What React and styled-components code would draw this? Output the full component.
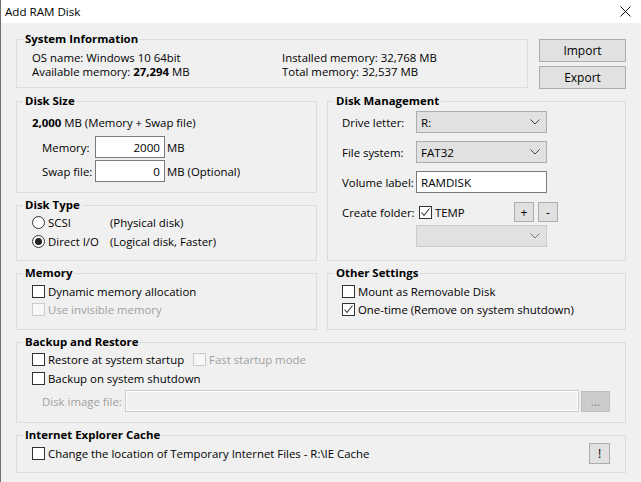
import React from 'react';
import styled, { createGlobalStyle } from 'styled-components';

//Global
const GlobalStyle = createGlobalStyle`
	html, body {
		margin: 0;
		padding: 0;
		background: #f0f0f0;
	}
	body {
		font-family: "Open Sans", "Liberation Sans", sans-serif;
		font-size: 11.4px;
		color: #000;
	}
`;

//Window frame
const Window = styled.div`
	width: 641px;
	height: 482px;
	box-sizing: border-box;
	border-left: 1px solid #6f6f6f;
	background: #f0f0f0;
	overflow: hidden;
	display: flex;
	flex-direction: column;
`;

const TitleBar = styled.div`
	height: 23px;
	flex: none;
	background: #fff;
	display: flex;
	align-items: center;
	justify-content: space-between;
	padding: 0 10px 0 4px;
	font-size: 11.6px;
`;

const Body = styled.div`
	display: flex;
	flex-direction: column;
	gap: 5px;
	padding: 9px 15px 0 15px;
`;

const TopRow = styled.div`
	display: flex;
	gap: 11px;
	align-items: flex-start;
`;

const Columns = styled.div`
	display: grid;
	grid-template-columns: 301px 299px;
	column-gap: 10px;
	align-items: stretch;
`;

const Column = styled.div`
	display: flex;
	flex-direction: column;
	gap: 5px;
`;

const ButtonColumn = styled.div`
	display: flex;
	flex-direction: column;
	gap: 4px;
	padding-top: 7px;
	width: 87px;
`;

//Group boxes
const Group = styled.fieldset`
	margin: 0;
	min-width: 0;
	box-sizing: border-box;
	border: 1px solid #dcdcdc;
	padding: ${props => props.$pad || '4px 15px 8px'};
	flex: ${props => props.$grow ? 1 : 'none'};
`;

const Legend = styled.legend`
	font-weight: 700;
	line-height: 14px;
	height: 14px;
	padding: 0 2px;
	margin-left: ${props => 6 - (props.$inset ?? 15)}px;
`;

const InfoGrid = styled.div`
	display: grid;
	grid-template-columns: 250px 1fr;
	line-height: 14px;
	white-space: nowrap;
`;

const Line = styled.div`
	line-height: 14px;
	white-space: nowrap;
`;

const FieldGrid = styled.div`
	display: grid;
	grid-template-columns: ${props => props.$label}px ${props => props.$field}px auto;
	row-gap: ${props => props.$gap}px;
	align-items: center;
	margin: ${props => props.$margin || '0'};
`;

const Text = styled.span`
	color: ${props => props.$disabled ? '#a0a0a0' : '#000'};
	white-space: nowrap;
	margin-left: ${props => props.$ml || 0}px;
	width: ${props => props.$w ? `${props.$w}px` : 'auto'};
	flex: none;
`;

//Controls
const Button = styled.button`
	box-sizing: border-box;
	width: ${props => props.$w}px;
	height: ${props => props.$h}px;
	padding: 0;
	margin: 0;
	font-family: inherit;
	font-size: 12px;
	color: ${props => props.$disabled ? '#8a8a8a' : '#000'};
	background: ${props => props.$disabled ? '#cccccc' : '#e1e1e1'};
	border: 1px solid ${props => props.$disabled ? '#bfbfbf' : '#adadad'};
	display: inline-flex;
	align-items: center;
	justify-content: center;
	flex: none;
`;

const TextInput = styled.input`
	box-sizing: border-box;
	width: ${props => props.$w}px;
	height: 22px;
	margin: 0;
	padding: 0 4px;
	font-family: inherit;
	font-size: 11.6px;
	color: #000;
	text-align: ${props => props.$align || 'left'};
	background: ${props => props.$disabled ? '#f0f0f0' : '#fff'};
	border: 1px solid ${props => props.$disabled ? '#cccccc' : '#7a7a7a'};
	box-shadow: ${props => props.$disabled ? 'inset 0 0 0 1px #fff' : 'none'};
	outline: none;
	flex: none;
`;

const Combo = styled.div`
	box-sizing: border-box;
	width: 131px;
	height: 22px;
	display: flex;
	align-items: center;
	justify-content: space-between;
	padding: 0 6px 0 4px;
	font-size: 11.6px;
	background: #e1e1e1;
	border: 1px solid ${props => props.$disabled ? '#cccccc' : '#adadad'};
`;

const Chevron = ({ color }) => (
	<svg width="10" height="6" viewBox="0 0 10 6">
		<polyline points="0.5,0.5 5,5 9.5,0.5" fill="none" stroke={color} strokeWidth="1" />
	</svg>
);

const CheckBox = styled.span`
	box-sizing: border-box;
	width: 13px;
	height: 13px;
	flex: none;
	display: inline-flex;
	align-items: center;
	justify-content: center;
	background: ${props => props.$disabled ? '#f7f7f7' : '#fff'};
	border: 1px solid ${props => props.$disabled ? '#cccccc' : '#333'};
`;

const Check = ({ checked, disabled }) => (
	<CheckBox $disabled={disabled}>
		{checked && (
			<svg width="11" height="11" viewBox="0 0 11 11">
				<polyline points="1.5,5.5 4,8.5 9.5,1.5" fill="none" stroke="#333" strokeWidth="1.1" />
			</svg>
		)}
	</CheckBox>
);

const RadioCircle = styled.span`
	box-sizing: border-box;
	width: 13px;
	height: 13px;
	flex: none;
	border-radius: 50%;
	border: 1px solid #333;
	background: #fff;
	display: inline-flex;
	align-items: center;
	justify-content: center;
	&::after {
		content: '';
		width: 7px;
		height: 7px;
		border-radius: 50%;
		background: ${props => props.$on ? '#222' : 'transparent'};
	}
`;

const OptionRow = styled.div`
	display: flex;
	align-items: center;
	gap: 3px;
	height: ${props => props.$h || 18}px;
	white-space: nowrap;
`;

const RadioGrid = styled.div`
	display: grid;
	grid-template-columns: 13px 59px auto;
	column-gap: 3px;
	grid-auto-rows: 19px;
	align-items: center;
`;

const BackupGrid = styled.div`
	display: grid;
	grid-template-columns: 161px auto;
	grid-auto-rows: 19px;
	align-items: center;
`;

const ImageRow = styled.div`
	display: flex;
	align-items: center;
	margin-top: 2px;
	padding-left: 10px;
	height: 22px;
`;

const FolderRow = styled.div`
	display: flex;
	align-items: center;
	height: 20px;
	gap: 3px;
	margin-top: 9px;
`;

const FolderControls = styled.div`
	display: flex;
	align-items: center;
	gap: 4px;
	margin: 0 53px 0 auto;
`;

const MgmtGrid = styled.div`
	display: grid;
	grid-template-columns: 74px 131px;
	row-gap: 8px;
	align-items: center;
	margin-top: ${props => props.$mt || 0}px;
`;

const CacheRow = styled.div`
	display: flex;
	align-items: center;
	height: 20px;
	gap: 3px;
`;

const Spacer = styled.div`
	flex: 1;
`;

const CloseIcon = () => (
	<svg width="11" height="11" viewBox="0 0 11 11">
		<path d="M0.5 0.5 L10.5 10.5 M10.5 0.5 L0.5 10.5" stroke="#111" strokeWidth="1" fill="none" />
	</svg>
);

const App = () => {
	return (
		<Window>
			<GlobalStyle />
			<TitleBar>
				<span>Add RAM Disk</span>
				<CloseIcon />
			</TitleBar>
			<Body>
				<TopRow>
					<Group $grow $pad="5px 15px 8px">
						<Legend>System Information</Legend>
						<InfoGrid>
							<span>OS name: Windows 10 64bit</span>
							<span>Installed memory: 32,768 MB</span>
							<span>Available memory: <b>27,294</b> MB</span>
							<span>Total memory: 32,537 MB</span>
						</InfoGrid>
					</Group>
					<ButtonColumn>
						<Button $w={87} $h={23}>Import</Button>
						<Button $w={87} $h={23}>Export</Button>
					</ButtonColumn>
				</TopRow>

				<Columns>
					<Column>
						<Group $pad="8px 15px 10px">
							<Legend>Disk Size</Legend>
							<Line><b>2,000</b> MB (Memory + Swap file)</Line>
							<FieldGrid $label={53} $field={70} $gap={2} $margin="6px 0 0 10px">
								<Text>Memory:</Text>
								<TextInput $w={70} $align="right" defaultValue="2000" />
								<Text $ml={2}>MB</Text>
								<Text>Swap file:</Text>
								<TextInput $w={70} $align="right" defaultValue="0" />
								<Text $ml={2}>MB (Optional)</Text>
							</FieldGrid>
						</Group>
						<Group $pad="1px 15px 9px">
							<Legend>Disk Type</Legend>
							<RadioGrid>
								<RadioCircle />
								<Text>SCSI</Text>
								<Text>(Physical disk)</Text>
								<RadioCircle $on />
								<Text>Direct I/O</Text>
								<Text>(Logical disk, Faster)</Text>
							</RadioGrid>
						</Group>
					</Column>
					<Group $pad="3px 14px 10px">
						<Legend $inset={14}>Disk Management</Legend>
						<MgmtGrid>
							<Text>Drive letter:</Text>
							<Combo>R:<Chevron color="#444" /></Combo>
							<Text>File system:</Text>
							<Combo>FAT32<Chevron color="#444" /></Combo>
							<Text>Volume label:</Text>
							<TextInput $w={131} defaultValue="RAMDISK" />
						</MgmtGrid>
						<FolderRow>
							<Text $w={74}>Create folder:</Text>
							<Check checked />
							<Text>TEMP</Text>
							<FolderControls>
								<Button $w={20} $h={20}>+</Button>
								<Button $w={20} $h={20}>-</Button>
							</FolderControls>
						</FolderRow>
						<MgmtGrid $mt={3}>
							<span />
							<Combo $disabled><span /><Chevron color="#777" /></Combo>
						</MgmtGrid>
					</Group>
				</Columns>

				<Columns>
					<Group $pad="2px 15px 11px">
						<Legend>Memory</Legend>
						<OptionRow><Check /><Text>Dynamic memory allocation</Text></OptionRow>
						<OptionRow><Check disabled /><Text $disabled>Use invisible memory</Text></OptionRow>
					</Group>
					<Group $pad="2px 14px 11px">
						<Legend $inset={14}>Other Settings</Legend>
						<OptionRow><Check /><Text>Mount as Removable Disk</Text></OptionRow>
						<OptionRow><Check checked /><Text>One-time (Remove on system shutdown)</Text></OptionRow>
					</Group>
				</Columns>

				<Group $pad="1px 15px 10px">
					<Legend>Backup and Restore</Legend>
					<BackupGrid>
						<OptionRow><Check /><Text>Restore at system startup</Text></OptionRow>
						<OptionRow><Check disabled /><Text $disabled>Fast startup mode</Text></OptionRow>
						<OptionRow><Check /><Text>Backup on system shutdown</Text></OptionRow>
					</BackupGrid>
					<ImageRow>
						<Text $disabled $w={83}>Disk image file:</Text>
						<TextInput $w={454} $disabled />
						<Spacer />
						<Button $w={29} $h={21} $disabled>...</Button>
					</ImageRow>
				</Group>

				<Group $pad="1px 15px 9px">
					<Legend>Internet Explorer Cache</Legend>
					<CacheRow>
						<Check />
						<Text>Change the location of Temporary Internet Files - R:\IE Cache</Text>
						<Spacer />
						<Button $w={21} $h={21}>!</Button>
					</CacheRow>
				</Group>
			</Body>
		</Window>
	);
};

export default App;
